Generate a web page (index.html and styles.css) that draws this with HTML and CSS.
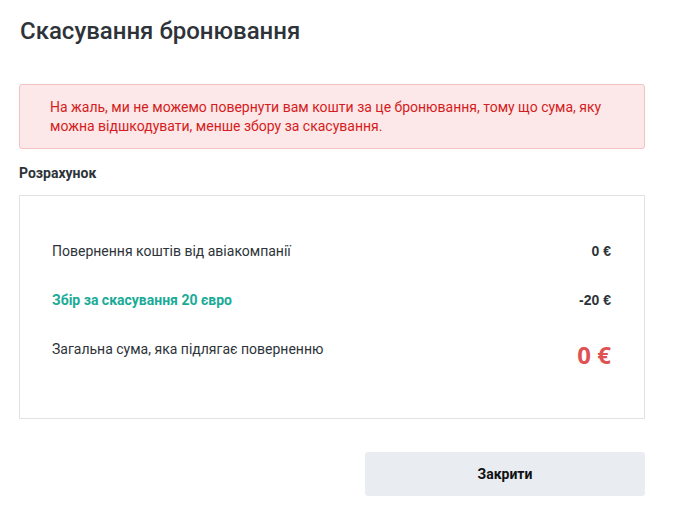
FILE: index.html
```html
<!DOCTYPE html>
<html lang="uk">
<head>
<meta charset="utf-8">
<link rel="stylesheet" href="styles.css">
</head>
<body>
<div class="page">
  <h1 class="title">Скасування бронювання</h1>
  <div class="alert">На жаль, ми не можемо повернути вам кошти за це бронювання, тому що сума, яку можна відшкодувати, менше збору за скасування.</div>
  <div class="section-label">Розрахунок</div>
  <div class="calc">
    <div class="row">
      <span class="label">Повернення коштів від авіакомпанії</span>
      <span class="value">0 €</span>
    </div>
    <div class="row">
      <span class="label fee">Збір за скасування 20 євро</span>
      <span class="value">-20 €</span>
    </div>
    <div class="row total">
      <span class="label">Загальна сума, яка підлягає поверненню</span>
      <span class="value big">0 €</span>
    </div>
  </div>
  <div class="actions">
    <button class="close-btn">Закрити</button>
  </div>
</div>
</body>
</html>
```

FILE: styles.css
```css
* { box-sizing: border-box; }
html, body { margin: 0; padding: 0; background: #fff; }
body { font-family: Roboto, "Noto Sans", sans-serif; color: #2d3339; }
.page { width: 645px; padding: 16px 0 0 19px; }
.title {
  margin: 0 0 0 1px;
  font-size: 24px;
  font-weight: 500;
  line-height: 30px;
  color: #2d3339;
}
.alert {
  margin-top: 38px;
  height: 65px;
  background: #fce8e8;
  border: 1px solid #f5c2c2;
  border-radius: 3px;
  padding: 13px 40px 0 30px;
  font-size: 14px;
  line-height: 19px;
  color: #d51c22;
}
.section-label {
  margin-top: 15px;
  font-size: 14px;
  font-weight: 700;
  line-height: 19px;
  color: #2d3339;
}
.calc {
  margin-top: 12px;
  height: 224px;
  border: 1px solid #e1e2e6;
  padding: 46px 33px 0 32px;
  display: flex;
  flex-direction: column;
  gap: 30px;
}
.row {
  display: flex;
  justify-content: space-between;
  align-items: flex-start;
  font-size: 14px;
  line-height: 19px;
}
.label { color: #2d3339; }
.fee { color: #1aab97; font-weight: 700; }
.value {
  font-family: "Liberation Sans", Arial, sans-serif;
  font-weight: 700;
  font-size: 14px;
  color: #2d3339;
}
.value.big {
  font-family: "Open Sans", sans-serif;
  font-size: 24px;
  line-height: 30px;
  color: #e05252;
}
.actions {
  margin-top: 33px;
  display: flex;
  justify-content: flex-end;
}
.close-btn {
  width: 280px;
  height: 44px;
  border: none;
  border-radius: 3px;
  background: #e9edf1;
  font-family: Roboto, sans-serif;
  font-size: 14px;
  font-weight: 700;
  color: #111;
}
```
